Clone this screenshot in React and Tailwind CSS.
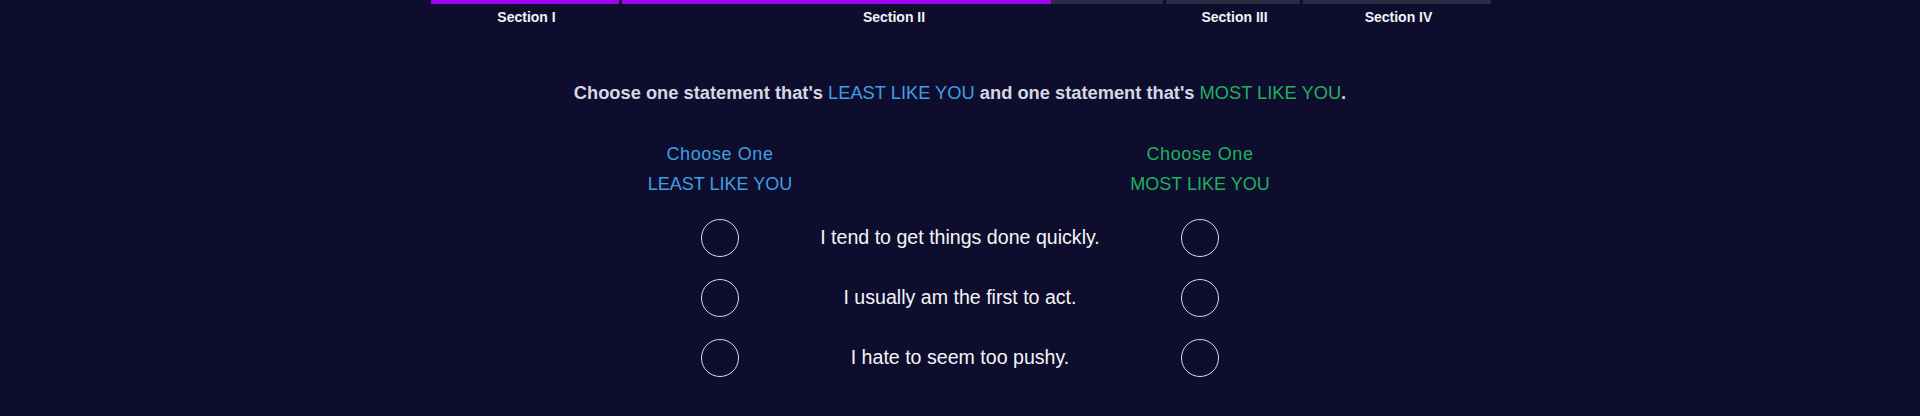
import React from "react";

const sections = [
  { label: "Section I", width: "w-[188px]", fill: 100, current: false },
  { label: "Section II", width: "w-[541px]", fill: 79.3, current: true },
  { label: "Section III", width: "w-[134px]", fill: 0, current: false },
  { label: "Section IV", width: "w-[188px]", fill: 0, current: false },
];

const statements = [
  "I tend to get things done quickly.",
  "I usually am the first to act.",
  "I hate to seem too pushy.",
];

const Radio = () => (
  <button className="w-[38px] h-[38px] rounded-full border border-[#d9d9e6] bg-transparent" />
);

export default function App() {
  return (
    <div className="min-h-[416px] w-full bg-[#0e0d2e] text-white font-['Liberation_Sans',Arial,sans-serif]">
      {/* progress */}
      <div className="flex justify-center gap-[3px] pl-[2px]">
        {sections.map((s) => (
          <div key={s.label} className={`${s.width} flex flex-col items-center`}>
            <div className="w-full h-[4px] bg-[#2b2a45]">
              <div className="h-full bg-[#a100f2]" style={{ width: `${s.fill}%` }} />
            </div>
            <div className="mt-[3px] pl-[3px] text-[14px] leading-5 font-bold text-[#f2f2f7]">{s.label}</div>
          </div>
        ))}
      </div>

      <p className="mt-[52px] text-center text-[18.3px] leading-7 font-bold text-[#d6d6e4]">
        Choose one statement that's{" "}
        <span className="font-normal text-[#3f9fe0]">LEAST LIKE YOU</span> and one statement that's{" "}
        <span className="font-normal text-[#1fb15f]">MOST LIKE YOU</span>.
      </p>

      <div className="mt-[32px] mx-auto w-[640px] grid grid-cols-[160px_320px_160px]">
        <div className="flex flex-col items-center text-[18px] leading-[30px] text-[#3f9fe0] whitespace-nowrap">
          <span className="tracking-[0.6px]">Choose One</span>
          <span>LEAST LIKE YOU</span>
        </div>
        <div />
        <div className="flex flex-col items-center text-[18px] leading-[30px] text-[#1fb15f] whitespace-nowrap">
          <span className="tracking-[0.6px]">Choose One</span>
          <span>MOST LIKE YOU</span>
        </div>

        <div className="col-span-3 h-[9px]" />

        {statements.map((text) => (
          <React.Fragment key={text}>
            <div className="h-[60px] flex items-center justify-center">
              <Radio />
            </div>
            <div className="h-[60px] flex items-center justify-center text-[19.6px] text-[#f4f4f8] whitespace-nowrap">
              {text}
            </div>
            <div className="h-[60px] flex items-center justify-center">
              <Radio />
            </div>
          </React.Fragment>
        ))}
      </div>
    </div>
  );
}
